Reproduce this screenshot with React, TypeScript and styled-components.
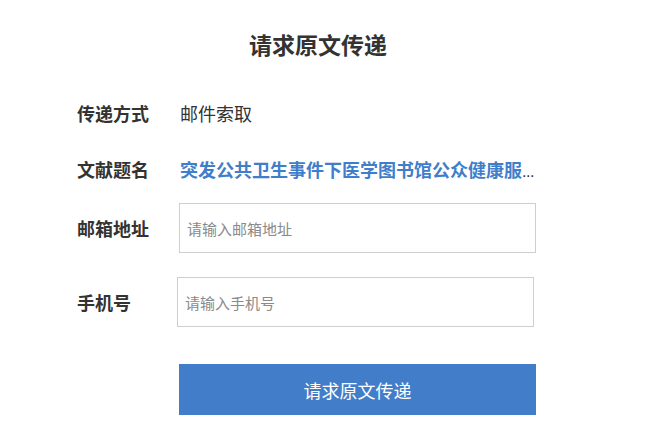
import React from "react";
import styled, { createGlobalStyle } from "styled-components";

const Global = createGlobalStyle`
  html, body { margin: 0; padding: 0; background: #fff; }
  body { font-family: "Noto Sans CJK SC", "Noto Sans", sans-serif; color: #333; }
`;

const Page = styled.div`
  width: 658px;
  display: flex;
  flex-direction: column;
`;

const Title = styled.h1`
  margin: 29px 0 0;
  padding-right: 22px;
  height: 30px;
  line-height: 30px;
  font-size: 23px;
  font-weight: 700;
  color: #333;
  text-align: center;
`;

const Row = styled.div<{ $top: number; $h: number }>`
  display: flex;
  align-items: center;
  margin-top: ${(p) => p.$top}px;
  height: ${(p) => p.$h}px;
  padding-left: 77px;
`;

const Label = styled.div`
  width: 103px;
  flex: none;
  font-size: 18px;
  font-weight: 700;
  color: #333;
  white-space: nowrap;
`;

const Value = styled.div`
  font-size: 18px;
  color: #333;
`;

const TitleValue = styled.div`
  width: 360px;
  font-size: 18px;
  font-weight: 700;
  color: #333;
  white-space: nowrap;
`;

const Link = styled.a`
  color: #3f7ecb;
  text-decoration: none;
`;

const Dots = styled.span`
  font-family: "Liberation Sans", sans-serif;
  font-weight: 400;
  font-size: 16px;
  letter-spacing: -0.5px;
  color: #333;
`;

const Input = styled.input<{ $shift?: number }>`
  box-sizing: border-box;
  width: 357px;
  height: 50px;
  margin-left: ${(p) => p.$shift ?? 0}px;
  border: 1px solid #cfcfcf;
  padding: 0 7px;
  font-family: "Noto Sans CJK SC", sans-serif;
  font-size: 15px;
  color: #333;
  outline: none;
  &::placeholder { color: #8a8a8a; }
`;

const ButtonRow = styled.div`
  display: flex;
  margin-top: 37px;
  padding-left: 179px;
`;

const Submit = styled.button`
  width: 357px;
  height: 51px;
  border: none;
  background: #427dc9;
  color: #fff;
  font-family: "Noto Sans CJK SC", sans-serif;
  font-size: 18px;
  cursor: pointer;
`;

export default function App() {
  return (
    <>
      <Global />
      <Page>
        <Title>请求原文传递</Title>
        <Row $top={34} $h={40}>
          <Label>传递方式</Label>
          <Value>邮件索取</Value>
        </Row>
        <Row $top={16} $h={40}>
          <Label>文献题名</Label>
          <TitleValue title="突发公共卫生事件下医学图书馆公众健康服务研究">
            <Link href="#">突发公共卫生事件下医学图书馆公众健康服</Link>
            <Dots>...</Dots>
          </TitleValue>
        </Row>
        <Row $top={14} $h={50}>
          <Label>邮箱地址</Label>
          <Input $shift={-1} placeholder="请输入邮箱地址" />
        </Row>
        <Row $top={24} $h={50}>
          <Label>手机号</Label>
          <Input $shift={-3} placeholder="请输入手机号" />
        </Row>
        <ButtonRow>
          <Submit>请求原文传递</Submit>
        </ButtonRow>
      </Page>
    </>
  );
}
